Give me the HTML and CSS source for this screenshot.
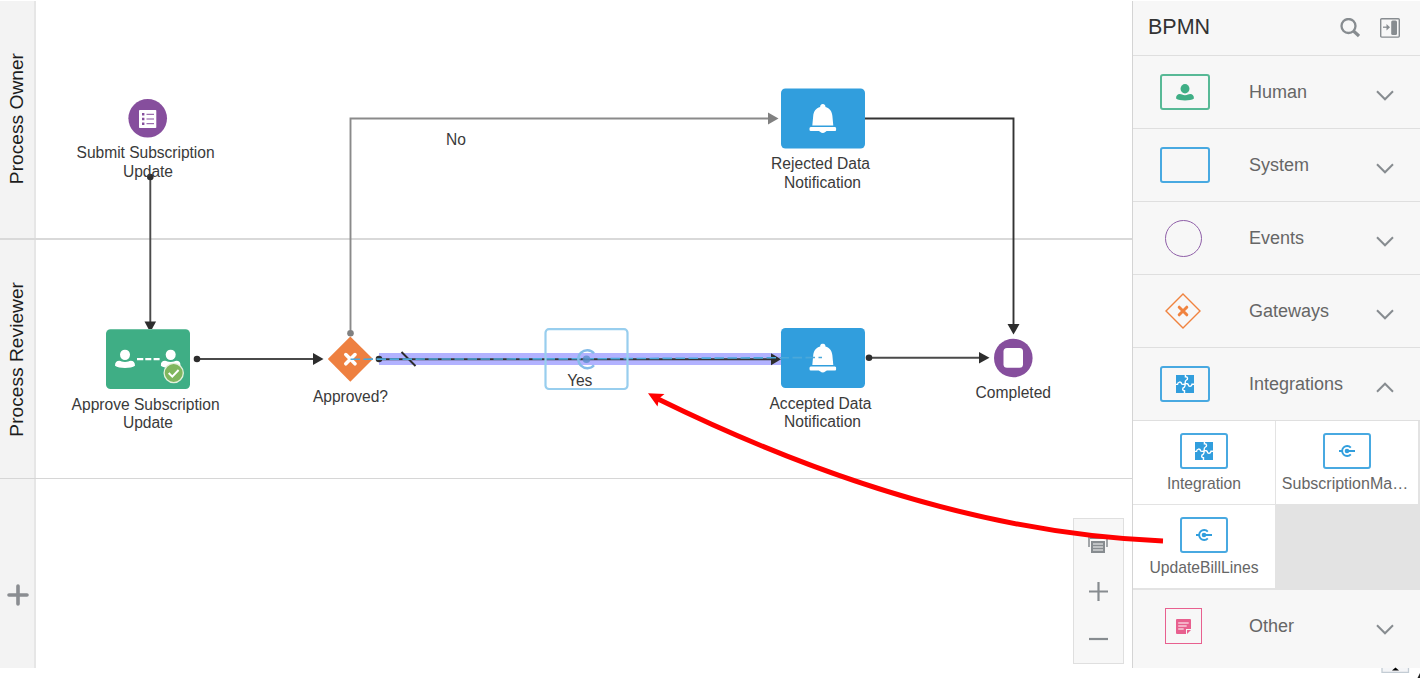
FILE: index.html
```html
<!DOCTYPE html>
<html lang="en">
<head>
<meta charset="utf-8">
<title>BPMN</title>
<link rel="stylesheet" href="styles.css">
</head>
<body>
<svg class="defs" aria-hidden="true">
  <defs>
    <symbol id="bell" viewBox="0 0 27 30">
      <path d="M13.500 0a2.600 2.600 0 0 1 2.600 3.100c4.400 1.200 6.700 4.600 7 9l.9 9.400H3l.9-9.400c.3-4.400 2.600-7.800 7-9A2.600 2.600 0 0 1 13.500 0z"/>
      <rect x="0" y="23" width="27" height="4" rx="1.500"/>
      <path d="M9.500 26.500h8c-.9 1.400-2 2-4 2.600-2-.6-3.100-1.200-4-2.600z"/>
    </symbol>
    <symbol id="person" viewBox="0 0 20 19">
      <ellipse cx="10" cy="5.300" rx="5" ry="5.300"/>
      <path d="M4.300 11.300c1.700 0 2.800 1.300 5.700 1.300s4-1.300 5.700-1.300C18.500 11.300 20 13 20 16.300 18 17.900 14 18.500 10 18.500S2 17.900 0 16.300c0-3.300 1.500-5 4.300-5z"/>
    </symbol>
    <symbol id="puzzle" viewBox="0 0 18 18">
      <rect width="18" height="18" fill="#319edd"/>
      <path d="M9.400 0V1.700C12 1.400 12.200 4.700 10.300 5.100 8.800 5.500 9.200 7.300 9.200 8.700S9 11.500 8.300 12.200C6 12.600 6.200 15.900 8.500 15.700V18M0 9.400H1.500C1.700 6.600 5.200 6.300 5.500 8.600 5.800 9.800 8.300 9.400 9.200 8.900 10.500 8.300 12 8.800 12.300 9.800 12.800 12 15.600 11.500 16 9.300H18" fill="none" stroke="#fff" stroke-width="1.400"/>
    </symbol>
    <symbol id="connector" viewBox="0 0 18 12">
      <path d="M12.800 2.600A5 5 0 1 0 12.800 9.400M1 6h3M9 6h8" fill="none" stroke="#319edd" stroke-width="1.900"/>
      <circle cx="9" cy="6" r="2.300" fill="#319edd"/>
    </symbol>
    <symbol id="chevron" viewBox="0 0 18 11">
      <path d="M1 1.200 9 9.300 17 1.200" fill="none" stroke="#878c90" stroke-width="2"/>
    </symbol>
  </defs>
</svg>
<div class="app">
  <main class="canvas">
    <section class="lane lane-owner"><div class="lane-head"><span>Process Owner</span></div></section>
    <section class="lane lane-reviewer"><div class="lane-head"><span>Process Reviewer</span></div></section>
    <section class="lane lane-new">
      <div class="lane-head">
        <svg width="22" height="22" viewBox="0 0 22 22"><path d="M11 2v18M2 11h18" stroke="#8a8d91" stroke-width="3.600" stroke-linecap="round"/></svg>
      </div>
    </section>
    <div class="zoombar">
      <svg width="20" height="20" viewBox="0 0 20 20" fill="none" stroke="#878c90"><path d="M1 13V2h18v11" stroke-width="1.500"/><path d="M3 7h14v12H3z" fill="#878c90" stroke="none"/><path d="M5 10h10M5 13h10M5 16h10" stroke="#f7f7f7" stroke-width="1"/><path d="M2 4h16" stroke-width="2"/></svg>
      <svg width="20" height="20" viewBox="0 0 20 20"><path d="M10.500 0v19M1 9.500h19" stroke="#878c90" stroke-width="2.200"/></svg>
      <svg width="20" height="20" viewBox="0 0 20 20"><path d="M1 10h19" stroke="#878c90" stroke-width="2.200"/></svg>
    </div>
  </main>
  <aside class="palette">
    <header class="palette-head">
      <h1>BPMN</h1>
      <svg class="search" width="20" height="20" viewBox="0 0 20 20" fill="none" stroke="#878c90"><circle cx="8.500" cy="8" r="7" stroke-width="2.300"/><path d="m13.500 13 5.500 5" stroke-width="3.200"/></svg>
      <svg width="20" height="20" viewBox="0 0 20 20" fill="none" stroke="#878c90"><rect x=".7" y=".7" width="18.600" height="18.400" rx="1" stroke-width="1.400"/><rect x="11.200" y="2.400" width="5.800" height="14.700" rx="1.500" fill="#878c90" stroke="none"/><path d="M3 9.200h4.500" stroke-width="1.300"/><path d="M6.500 6 10 9.200 6.500 12.400z" fill="#878c90" stroke="none"/></svg>
    </header>
    <div class="group"><div class="icon"><i class="box green"><svg width="18" height="17" fill="#3fae85"><use href="#person"/></svg></i></div><span>Human</span><svg class="chev"><use href="#chevron"/></svg></div>
    <div class="group"><div class="icon"><i class="box"></i></div><span>System</span><svg class="chev"><use href="#chevron"/></svg></div>
    <div class="group"><div class="icon"><i class="box circle"></i></div><span>Events</span><svg class="chev"><use href="#chevron"/></svg></div>
    <div class="group"><div class="icon"><svg class="gateway" width="36" height="36" viewBox="0 0 36 36" fill="none" stroke="#f0833f"><path d="M18 1 35 18 18 35 1 18z" stroke-width="1.400"/><path d="m14.200 14.200 7.600 7.600m0-7.600-7.600 7.600" stroke-width="3" stroke-linecap="round"/></svg></div><span>Gateways</span><svg class="chev"><use href="#chevron"/></svg></div>
    <div class="group"><div class="icon"><i class="box"><svg width="18" height="18"><use href="#puzzle"/></svg></i></div><span>Integrations</span><svg class="chev up"><use href="#chevron"/></svg></div>
    <div class="tiles">
      <div class="tile"><i class="box"><svg width="18" height="18"><use href="#puzzle"/></svg></i><span>Integration</span></div>
      <div class="tile wide"><i class="box"><svg width="18" height="12"><use href="#connector"/></svg></i><span>SubscriptionMa…</span></div>
      <div class="tile"><i class="box"><svg width="18" height="12"><use href="#connector"/></svg></i><span>UpdateBillLines</span></div>
    </div>
    <div class="group last"><div class="icon"><i class="box pink"><svg width="15" height="15" viewBox="0 0 15 15"><path d="M1 0h13a1 1 0 0 1 1 1v9h-5v5H1a1 1 0 0 1-1-1V1a1 1 0 0 1 1-1zM11 11h4l-4 4z" fill="#e8608f"/><path d="M2.200 4h10.500M2.200 7h8.500M2.200 10h5.500" stroke="#fff" stroke-width="1.200"/></svg></i></div><span>Other</span><svg class="chev"><use href="#chevron"/></svg></div>
  </aside>
</div>
<svg class="diagram" width="1420" height="678" viewBox="0 0 1420 678">
  <!-- flows -->
  <g fill="none" stroke="#4a4a4a" stroke-width="1.900">
    <path d="M150.300 177V324M197 359H316M869 357.700H982"/>
    <path d="M864 118.500H1013.500V326" stroke="#333"/>
    <path d="M350.500 333V118.500H770" stroke="#8a8a8a"/>
  </g>
  <g fill="#2d2d2d">
    <circle cx="150.300" cy="177" r="3.300"/><path d="M144.500 321.500h11.600L152 329h-3.500z"/>
    <circle cx="197" cy="359" r="3.300"/><path d="M313 353v12l10.500-6z"/>
    <circle cx="869" cy="357.800" r="3.300"/><path d="M979 352v11.600l10.500-5.800z"/>
    <path d="M1007.500 324h12l-6 10.500z"/>
  </g>
  <circle cx="350.500" cy="333.300" r="3.300" fill="#808080"/><path d="M768 112.600v12l10.500-6z" fill="#808080"/>

  <!-- nodes -->
  <circle cx="147.700" cy="118.300" r="19.300" fill="#864e9d"/>
  <g><rect x="139" y="110" width="17.300" height="18" rx=".8" fill="#fff"/><path d="M146.500 114.300h7.500M146.500 119h7.500M146.500 123.700h7.500" stroke="#864e9d" stroke-width="1"/><path d="M142 114.300h2.400M142 119h2.400M142 123.700h2.400" stroke="#864e9d" stroke-width="2.400"/></g>
  <rect x="106" y="329.300" width="84" height="59.700" rx="4.500" fill="#3fae85"/>
  <g fill="#fff"><use href="#person" x="115" y="349.500" width="20" height="19"/><use href="#person" x="160.700" y="349.500" width="20" height="19"/><path d="M137 358h6.300v2.300H137zM145.300 358h6v2.300h-6zM153.600 358h6v2.300h-6z"/></g>
  <circle cx="173.700" cy="373" r="9.600" fill="#80b65e" stroke="#e4f1dc" stroke-width="1.300"/><path d="m168.700 373 3.600 3.600 6.300-6.600" fill="none" stroke="#fff" stroke-width="2"/>
  <path d="M350.300 336.500 373 359l-22.700 22.700L327.800 359z" fill="#ee8040"/>
  <path d="m345.800 354.600 9.200 9.200m0-9.200-9.200 9.200" stroke="#fff" stroke-width="3.600" stroke-linecap="round"/>
  <rect x="781" y="88.500" width="84" height="60" rx="4.500" fill="#319edd"/><use href="#bell" x="809.300" y="104" width="27" height="30" fill="#fff"/>
  <rect x="781" y="328" width="84" height="60" rx="4.500" fill="#319edd"/><use href="#bell" x="809.300" y="343.500" width="27" height="30" fill="#fff"/>
  <circle cx="1013.300" cy="358" r="19.300" fill="#864e9d"/><rect x="1003.500" y="348" width="19.500" height="19.700" rx="3.500" fill="#fff"/>

  <!-- highlighted flow with the dragged activity over it -->
  <path d="M379 359H781" stroke="#b2b2ff" stroke-width="12"/>
  <path d="M379 359.200H774" stroke="#333" stroke-width="1.900"/>
  <circle cx="379" cy="359" r="3.300" fill="#2d2d2d"/><path d="M771 353.300v12l10-6z" fill="#2d2d2d"/>
  <path d="m401.500 352 14 14" stroke="#2d2d2d" stroke-width="2"/>
  <path d="M350.500 359.200 586 358.800 822 357.500" fill="none" stroke="#4ba8da" stroke-width="1.600" stroke-dasharray="9.500 3.500"/>
  <rect x="545.500" y="329.200" width="82" height="59.800" rx="3.500" fill="none" stroke="#98ceee" stroke-width="2.200"/>
  <path d="M594 353.200a9 9 0 1 0 0 12" stroke="#84bce8" fill="none" stroke-width="2.400"/><circle cx="586.500" cy="359.200" r="3.800" fill="#5a8fca" opacity=".8"/>

  <!-- labels -->
  <g class="labels">
    <text x="145.600" y="158.300" textLength="138">Submit Subscription</text><text x="148" y="176.800" textLength="50">Update</text>
    <text x="145.600" y="409.800" textLength="148">Approve Subscription</text><text x="148" y="428.300" textLength="50">Update</text>
    <text x="456" y="145">No</text><text x="350.500" y="402.300" textLength="75">Approved?</text><text x="579.700" y="385.500" textLength="25">Yes</text>
    <text x="820.500" y="169" textLength="99">Rejected Data</text><text x="822.500" y="187.500" textLength="77">Notification</text>
    <text x="820.500" y="408.700" textLength="102">Accepted Data</text><text x="822.500" y="427.200" textLength="77">Notification</text>
    <text x="1013.300" y="397.800" textLength="75.500">Completed</text>
  </g>

  <!-- drag pointer -->
  <path d="M1163 541Q929 532 658 399" fill="none" stroke="#f00" stroke-width="5"/>
  <path d="M648 393.300 664.500 394 659 398.500 657.500 406.500z" fill="#f00"/>

  <!-- dock handle -->
  <rect x="1382" y="668" width="26" height="4" fill="#f4f5f7"/><path d="M1382 668v4.300h26.500V668" fill="none" stroke="#c3ccd4" stroke-width="1.300"/><path d="m1392 670.500 3.500-3 3.500 3z" fill="#000"/><path d="M1420 673v5h-2.500z" fill="#222"/>
</svg>
</body>
</html>
```
FILE: styles.css
```css
* { box-sizing: border-box; }
body { margin: 0; background: #fff; font-family: "Liberation Sans", Arial, sans-serif; height: 678px; overflow: hidden; position: relative; }
.defs { position: absolute; width: 0; height: 0; }
.app { display: flex; height: 668px; padding-top: 1px; }
.canvas { flex: 1; display: flex; flex-direction: column; position: relative; }
.lane { display: flex; border-bottom: 2px solid #d9d9d9; }
.lane-owner { height: 239px; }
.lane-reviewer { height: 239px; border-bottom: 1px solid #d6d6d6; }
.lane-new { flex: 1; border-bottom: 0; }
.lane-head { width: 36px; background: #f3f3f3; border-right: 2px solid #e6e6e6; display: flex; align-items: center; justify-content: center; font-size: 19.2px; color: #1c1c1c; }
.lane-owner .lane-head { padding-bottom: 2px; }
.lane-head span { writing-mode: vertical-rl; transform: rotate(180deg); white-space: nowrap; line-height: 22px; }
.lane-new .lane-head { padding: 43px 0 0 2px; }
.zoombar { position: absolute; left: 1073px; top: 517px; width: 51px; height: 146px; background: #f7f7f7; border: 1px solid #dfdfdf; display: flex; flex-direction: column; align-items: center; justify-content: space-between; padding: 15px 1px 14px 0; }
.palette { width: 288px; background: #f7f7f7; border-left: 1px solid #d4d4d4; display: flex; flex-direction: column; }
.palette-head { height: 55px; display: flex; align-items: center; padding: 0 20px 1px 15px; border-bottom: 1px solid #dfdfdf; }
.palette-head h1 { margin: 0; flex: 1; font-size: 21.500px; font-weight: 400; color: #333; }
.search { margin-right: 20px; }
.group { height: 73px; display: flex; align-items: center; padding: 0 26px 0 27px; border-bottom: 1px solid #dfdfdf; }
.group span { flex: 1; margin-left: 39px; font-size: 18px; color: #666; }
.icon { width: 50px; display: flex; justify-content: center; }
.box { display: flex; align-items: center; justify-content: center; flex: none; width: 50px; height: 36px; border: 2px solid #48a9e1; border-radius: 3px; }
.box.green { border-color: #58b996; }
.group .box.circle { width: 37px; height: 37px; margin-left: -3px; border: 1.400px solid #8f5fa8; border-radius: 50%; }
.group .box.pink { width: 37px; margin-left: -3px; border: 1.400px solid #e8608f; border-radius: 0; }
.gateway { margin-left: -5px; }
.chev { width: 18px; height: 11px; margin-top: 7px; }
.chev.up { transform: rotate(180deg); }
.tiles { height: 169px; display: grid; grid-template-columns: 142px 142px; grid-template-rows: 83px 83px; gap: 1px; background: #e3e3e3; }
.tile { background: #fff; display: flex; flex-direction: column; align-items: center; padding-top: 12px; font-size: 15.700px; color: #666; }
.tile .box { width: 48px; }
.tile span { margin-top: 6px; line-height: 18px; white-space: nowrap; }
.tile.wide span { font-size: 16px; margin-left: -4px; }
.last { height: auto; flex: 1; border-bottom: 0; padding-bottom: 6px; }
.diagram { position: absolute; left: 0; top: 0; }
.labels { font-size: 15.600px; fill: #3a3a3a; text-anchor: middle; }
```
